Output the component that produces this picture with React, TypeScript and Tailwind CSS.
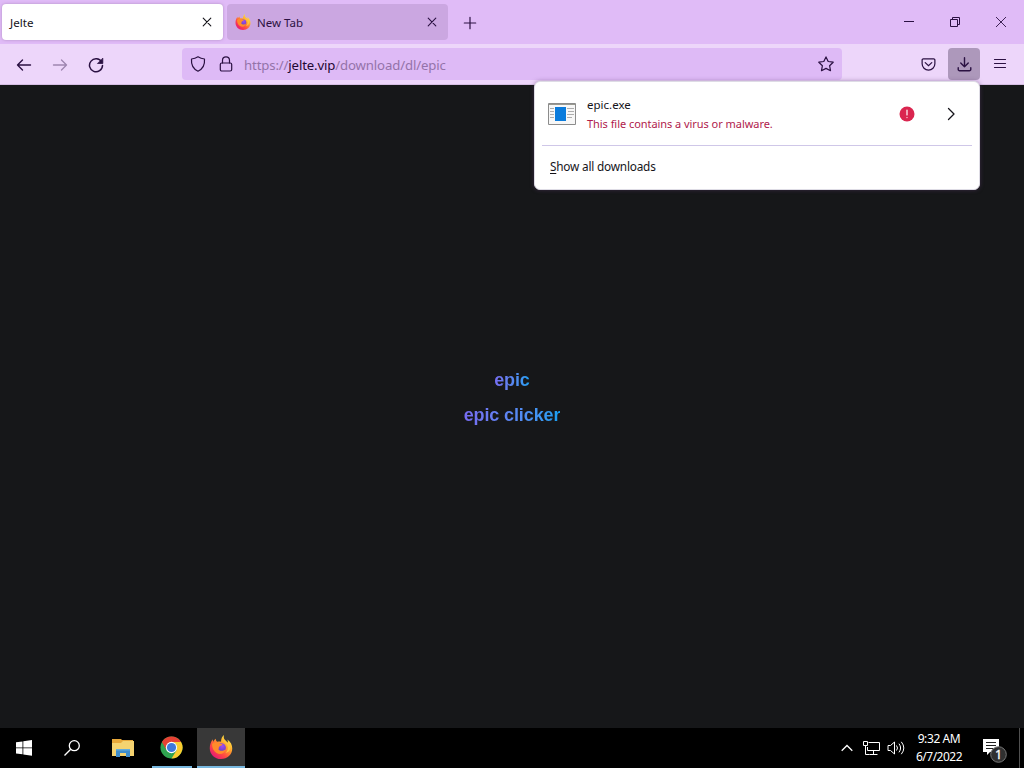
import type { ReactNode } from "react";

function Icon({ children, className = "" }: { children: ReactNode; className?: string }) {
  return (
    <svg viewBox="0 0 16 16" fill="none" stroke="currentColor" strokeWidth="1.2" strokeLinecap="round" strokeLinejoin="round" className={`size-4 shrink-0 ${className}`}>
      {children}
    </svg>
  );
}

function CloseIcon() {
  return (
    <svg viewBox="0 0 12 12" fill="none" stroke="currentColor" strokeWidth="1.1" strokeLinecap="round" className="size-3 shrink-0">
      <path d="M2.200 2.200l7.600 7.600M9.800 2.200l-7.600 7.600" />
    </svg>
  );
}

function FirefoxLogo({ id, className }: { id: string; className: string }) {
  return (
    <svg viewBox="0 0 32 32" className={className}>
      <defs>
        <linearGradient id={`${id}-body`} x1="0.85" y1="0.1" x2="0.2" y2="0.9">
          <stop offset="0" stopColor="#fff04a" />
          <stop offset="0.35" stopColor="#ffa42c" />
          <stop offset="0.7" stopColor="#ff4a42" />
          <stop offset="1" stopColor="#e91e70" />
        </linearGradient>
        <radialGradient id={`${id}-core`} cx="0.6" cy="0.3" r="0.8">
          <stop offset="0" stopColor="#a34df0" />
          <stop offset="1" stopColor="#5a3bb8" />
        </radialGradient>
      </defs>
      <path fill={`url(#${id}-body)`} d="M20 0c-1 4 0 6 3 8 1 1 1.500 2 2 3 .5-1.500 0-3.500-.5-5C29 9 31 13.500 31 18c0 8-6.500 14-15 14S1 25.500 1 17.500C1 13 2.500 9 5 5.500c0 1.500.2 2.500.7 3.500 1-2 2-3.200 3.300-4 0 2 .7 3 2 4 2-.5 4-.5 5 0C16 5 17.500 2 20 0z" />
      <circle cx="16.500" cy="17" r="6" fill={`url(#${id}-core)`} />
      <path fill="#ff8b2b" d="M4 12c3-3 7-3 10-1 1.500 1 3 1 4 1.200-1 2-3.500 2.300-4.500 3.300-.8 1 0 2.500-1 3.500 2 2.500 6 3 9.500 0-1 6-7 8-12 5-4-2.500-6-7-6-12z" />
      <path fill="#ffc53a" d="M19 9c4 1 6 4 6.200 8 .1 3-1.200 5.500-3.200 7 6-1 8-7 5-12-2-3-5-4-8-3z" />
    </svg>
  );
}

function ChromeLogo() {
  return (
    <svg viewBox="0 0 24 24" className="size-[23px]">
      <circle cx="12" cy="12" r="11.500" fill="#2fa350" />
      <path fill="#e64134" d="M2.040 6.250A11.500 11.500 0 0 1 21.960 6.250L12 6.500a6 6 0 0 0-5.300 8.200z" />
      <path fill="#fccb2f" d="M21.960 6.250A11.500 11.500 0 0 1 12 23.500l5.200-8.500A6 6 0 0 0 12 6.250z" />
      <circle cx="12" cy="12" r="5.900" fill="#fff" />
      <circle cx="12" cy="12" r="4.800" fill="#3f78dc" />
    </svg>
  );
}

function TabStrip() {
  return (
    <div className="flex h-11 shrink-0 bg-[#e0bbf7] pt-1 text-[#15141a]">
      <div className="ml-0.5 flex h-9 w-[221px] items-center justify-between rounded bg-white pr-2.5 pl-2 shadow-[0_0_3px_#80609080]">
        <span className="pt-0.5 text-[11.600px]">Jelte</span>
        <CloseIcon />
      </div>
      <div className="ml-1 flex h-9 w-[221px] items-center rounded bg-[#cba7e1] pr-2.5 pl-2 text-[#2b1142]">
        <FirefoxLogo id="tab" className="size-4" />
        <span className="ml-1.5 grow pt-0.5 text-[11.500px]">New Tab</span>
        <CloseIcon />
      </div>
      <div className="flex h-9 w-[43px] items-center justify-center pt-px text-[#2b1142]">
        <Icon><path d="M8 2.300v11.400M2.300 8h11.400" /></Icon>
      </div>
      <div className="ml-auto flex h-9 text-[#2b1142]">
        <div className="flex w-[46px] items-center justify-center"><svg viewBox="0 0 10 10" className="size-2.5" stroke="currentColor"><path d="M0 4.500h10" /></svg></div>
        <div className="flex w-[46px] items-center justify-center"><svg viewBox="0 0 10 10" className="size-2.5" fill="none" stroke="currentColor"><path d="M.5 2.500h7v7h-7zM2.500 2.500v-2h7v7h-2" /></svg></div>
        <div className="flex w-[46px] items-center justify-center"><svg viewBox="0 0 10 10" className="size-2.5" stroke="currentColor" strokeWidth=".9"><path d="M0 0l10 10M10 0L0 10" /></svg></div>
      </div>
    </div>
  );
}

function Toolbar() {
  return (
    <div className="flex h-[41px] shrink-0 items-center border-b border-[#d5bde2] bg-[#edd6fa] text-[#2b1142]">
      <div className="ml-4 flex w-[166px] items-center gap-5 pt-px">
        <Icon><path strokeWidth="1.400" d="M14.500 8H1.500M6.500 3L1.500 8l5 5" /></Icon>
        <Icon className="opacity-40"><path strokeWidth="1.400" d="M1.500 8h13M9.500 3l5 5-5 5" /></Icon>
        <Icon><path strokeWidth="1.500" d="M13.600 5A6.500 6.500 0 1 0 14.500 8.500" /><path fill="currentColor" strokeWidth=".8" d="M14.800 1.500v5H9.800z" /></Icon>
      </div>
      <div className="flex h-8 w-[660px] items-center rounded bg-[#debaf6] px-2">
        <Icon><path d="M8 .8c2 1.300 4.300 2 6.500 2.200.5 5.700-1.500 9.800-6.500 12.200C3 12.800 1 8.700 1.500 3 3.700 2.800 6 2.100 8 .8z" /></Icon>
        <Icon className="ml-3"><rect x="2.300" y="7" width="11.400" height="8" rx="1.500" /><path d="M4.500 7V4.300a3.500 3.500 0 0 1 7 0V7" /></Icon>
        <span className="ml-2.5 grow pt-[3px] text-[13.200px] tracking-[-0.140px] whitespace-nowrap text-[#9473a9]">https://<span className="text-[#1f0833]">jelte.vip</span>/download/dl/epic</span>
        <Icon><path d="M8 .9l2.200 4.600 5 .7-3.600 3.500.9 5L8 12.400l-4.500 2.300.9-5L.8 6.200l5-.7z" /></Icon>
      </div>
      <div className="ml-auto flex items-center pr-2">
        <div className="flex size-8 items-center justify-center"><svg viewBox="0 0 16 16" className="size-[15px]" fill="none" stroke="currentColor" strokeWidth="1.300" strokeLinecap="round"><path d="M2.500 2h11a1.300 1.300 0 0 1 1.300 1.300v3.900a6.800 6.800 0 0 1-13.600 0V3.300A1.300 1.300 0 0 1 2.500 2zM4.500 6L8 9.300 11.500 6" /></svg></div>
        <div className="ml-1 flex size-8 items-center justify-center rounded bg-[#ad98bb]"><svg viewBox="0 0 16 16" className="size-[15px]" fill="none" stroke="currentColor" strokeWidth="1.500" strokeLinecap="round" strokeLinejoin="round"><path d="M8 .8v9.700M4 6.500l4 4 4-4M1.300 11.500v1.700A1.500 1.500 0 0 0 2.800 14.700h10.400a1.500 1.500 0 0 0 1.500-1.500v-1.700" /></svg></div>
        <div className="ml-1 flex size-8 items-center justify-center"><Icon><path strokeWidth="1.200" d="M2.500 3.500h11M2.500 7.500h11M2.500 11.500h11" /></Icon></div>
      </div>
    </div>
  );
}

function DownloadsPanel() {
  return (
    <div className="absolute top-[81px] left-[534px] h-[109px] w-[446px] rounded-md border border-[#dedce5] bg-white px-[7px] text-[#15141a] shadow-[0_0_4px_#5d3d7080]">
      <div className="flex h-16 items-center border-b border-[#cfc7e8] pt-px pr-[13px] pl-1.5">
        <svg viewBox="0 0 28 22" className="h-[22px] w-7">
          <path fill="#f7f7f7" stroke="#8c8c8c" d="M.5.5h27v21H.5z" />
          <path fill="#999991" d="M1 1h26v1H1z" />
          <path fill="#0a7bdc" d="M7 4h11v14H7z" />
          <path stroke="#999" strokeWidth=".8" d="M2 5.500h4M2 8.500h4M2 11.500h4M2 14.500h4M19 5.500h7M20 8.500h6M19 11.500h7M19 14.500h5" />
        </svg>
        <div className="ml-[11px] grow leading-[19px]">
          <div className="text-[11.500px]">epic.exe</div>
          <div className="text-[11px] tracking-[-0.050px] whitespace-nowrap text-[#b01a4c]">This file contains a virus or malware.</div>
        </div>
        <svg viewBox="0 0 16 16" className="mr-[28px] size-4">
          <circle cx="8" cy="8" r="7.500" fill="#da254f" />
          <path stroke="#fff" strokeWidth="1.200" strokeLinecap="round" d="M8 4v5M8 11.500v.1" />
        </svg>
        <Icon><path strokeWidth="1.300" d="M5.500 2.500L11 8l-5.500 5.500" /></Icon>
      </div>
      <div className="flex h-[42px] items-center pl-2 text-[11.800px] tracking-[-0.200px]"><span><span className="underline underline-offset-2">S</span>how all downloads</span></div>
    </div>
  );
}

function Taskbar() {
  return (
    <div className="flex h-10 shrink-0 bg-black text-white">
      <div className="flex w-12 items-center justify-center">
        <svg viewBox="0 0 16 16" className="size-4" fill="currentColor"><path d="M0 2.300l6.500-.9v6H0zM7.300 1.300L16 0v7.400H7.300zM0 8.300h6.500v6L0 13.400zM7.300 8.300H16v7.500l-8.700-1.300z" /></svg>
      </div>
      <div className="flex w-12 items-center justify-center">
        <svg viewBox="0 0 16 16" className="size-4" fill="none" stroke="currentColor" strokeWidth="1.300"><circle cx="10.300" cy="5.700" r="5" /><path d="M6.700 9.300L.5 15.500" /></svg>
      </div>
      <div className="flex w-[53px] items-center justify-center">
        <svg viewBox="0 0 22 18" className="h-[18px] w-[22px]">
          <path fill="#e7a83a" d="M0 0h9l1 1h11v4H0z" />
          <path fill="#f5d370" d="M0 4h9l2-2h11v15H0z" />
          <path fill="#3f8dcb" d="M4 10h14v8h-4v-4H8v4H4z" />
          <path fill="#65acdb" d="M4 10h14v1.500H4z" />
        </svg>
      </div>
      <div className="ml-[3px] flex w-10 items-center justify-center border-b-2 border-[#78b8df] pr-px pt-px"><ChromeLogo /></div>
      <div className="ml-[5px] flex w-12 items-center justify-center border-b-2 border-[#78b8df] bg-[#383838] pb-px"><FirefoxLogo id="taskbar" className="size-6" /></div>
      <div className="ml-auto flex items-center">
        <svg viewBox="0 0 12 8" className="h-2 w-3" fill="none" stroke="currentColor" strokeWidth="1.300"><path d="M.7 6.800L6 1.500l5.300 5.300" /></svg>
        <svg viewBox="0 0 18 15" className="ml-2.5 h-[15px] w-[18px]" fill="none" stroke="currentColor"><path d="M5.500 1.500h11v8H4.500V6M10.500 9.500v4M6.500 13.500h8M.5.500h4v4h-4zM2.500 4.500v9h4" /></svg>
        <svg viewBox="0 0 18 16" className="ml-1.5 h-4 w-[18px]" fill="none" stroke="currentColor"><path d="M1 5.500h2.500l4-3.500v12l-4-3.500H1zM9.500 5.500q2 2.500 0 5M12 3.700q3.200 4.300 0 8.600M14.300 1.800q5 6.200 0 12.400" /></svg>
        <div className="ml-2 w-[52px] text-center text-[12px] leading-[18px] tracking-[-0.500px] whitespace-nowrap"><div className="tracking-[-0.400px]">9:32 AM</div><div>6/7/2022</div></div>
        <svg viewBox="0 0 25 24" className="mt-1.5 ml-[18px] h-6 w-[25px]">
          <path fill="#fff" d="M0 0h16v13H7l-3 3v-3H0z" />
          <path stroke="#222" d="M3 3.500h10M3 6.500h10M3 9.500h7" />
          <circle cx="15.500" cy="15.500" r="7.800" fill="#303030" stroke="#777" />
          <text x="15.500" y="20" textAnchor="middle" fill="#fff" stroke="#fff" strokeWidth=".3" fontSize="12.500">1</text>
        </svg>
        <div className="ml-[11px] h-10 w-px bg-[#505050]" />
        <div className="w-1" />
      </div>
    </div>
  );
}

export default function App() {
  return (
    <div className="relative flex h-screen w-full flex-col overflow-hidden bg-[#161719] font-['Noto_Sans',sans-serif]">
      <TabStrip />
      <Toolbar />
      <main className="flex grow flex-col items-center justify-center gap-[7px] pb-[18px] font-['Liberation_Sans',sans-serif] text-lg leading-7 font-bold tracking-[-0.120px]">
        <a className="bg-linear-to-r from-[#766cf2] to-[#139ff2] bg-clip-text text-transparent">epic</a>
        <a className="bg-linear-to-r from-[#766cf2] to-[#139ff2] bg-clip-text text-transparent">epic clicker</a>
      </main>
      <Taskbar />
      <DownloadsPanel />
    </div>
  );
}
